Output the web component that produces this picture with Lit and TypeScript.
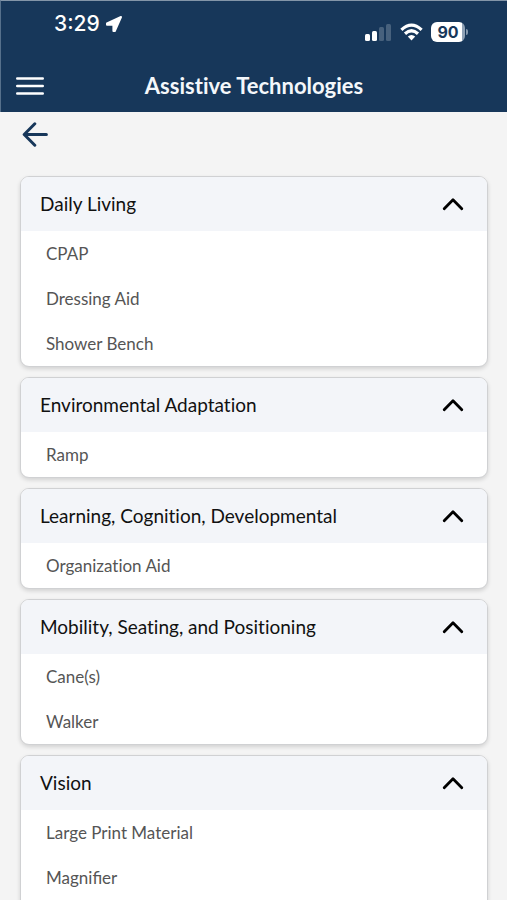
import { LitElement, html, css } from "lit";
import { customElement, property, state } from "lit/decorators.js";

interface Category {
  name: string;
  items: string[];
}

const CATEGORIES: Category[] = [
  { name: "Daily Living", items: ["CPAP", "Dressing Aid", "Shower Bench"] },
  { name: "Environmental Adaptation", items: ["Ramp"] },
  { name: "Learning, Cognition, Developmental", items: ["Organization Aid"] },
  { name: "Mobility, Seating, and Positioning", items: ["Cane(s)", "Walker"] },
  { name: "Vision", items: ["Large Print Material", "Magnifier"] },
];

@customElement("status-bar")
export class StatusBar extends LitElement {
  static styles = css`
    :host {
      box-sizing: border-box;
      display: flex;
      justify-content: space-between;
      align-items: flex-start;
      height: 59px;
      padding: 10px 39px 0 53px;
      color: #fff;
      font-family: Inter, sans-serif;
    }
    .clock {
      display: flex;
      align-items: center;
      gap: 5px;
      font-size: 21px;
      line-height: 26px;
      font-weight: 500;
    }
    .signals {
      display: flex;
      align-items: center;
      gap: 8px;
      padding-top: 11px;
    }
    .battery {
      display: flex;
      align-items: center;
      gap: 1px;
    }
    .level {
      width: 34px;
      height: 20px;
      border-radius: 6px;
      background: linear-gradient(90deg, #fff 90%, #8fa1b5 90%);
      color: #17375a;
      font-size: 16px;
      line-height: 20px;
      font-weight: 700;
      text-align: center;
    }
    .cap {
      width: 2px;
      height: 6px;
      border-radius: 0 2px 2px 0;
      background: #8397ac;
    }
    svg {
      display: block;
    }
  `;

  render() {
    return html`
      <div class="clock">
        <span>3:29</span>
        <svg width="18" height="18" viewBox="0 0 18 18" aria-hidden="true">
          <path d="M16 2 9.8 16H8.4V9.8H2V8.4Z" fill="#fff" stroke="#fff" stroke-width="2" stroke-linejoin="round" />
        </svg>
      </div>
      <div class="signals">
        <svg width="27" height="18" viewBox="0 0 27 18" aria-hidden="true">
          <rect x="0" y="11" width="5" height="7" rx="1.5" fill="#fff" />
          <rect x="7" y="8" width="5" height="10" rx="1.5" fill="#fff" />
          <rect x="14" y="4" width="5" height="14" rx="1.5" fill="#47617d" />
          <rect x="21" y="1" width="5" height="17" rx="1.5" fill="#47617d" />
        </svg>
        <svg width="23" height="18" viewBox="0 0 23 18" aria-hidden="true">
          <g fill="none" stroke="#fff" stroke-width="3.2">
            <path d="M1.4 6.8Q11.5-2.6 21.6 6.8" />
            <path d="M5 10.8Q11.5 4.8 18 10.8" />
          </g>
          <path d="M7.8 13.4Q11.5 10.4 15.2 13.4L11.5 17.4Z" fill="#fff" />
        </svg>
        <div class="battery">
          <div class="level">90</div>
          <div class="cap"></div>
        </div>
      </div>
    `;
  }
}

@customElement("category-card")
export class CategoryCard extends LitElement {
  @property({ attribute: false }) category!: Category;
  @state() private open = true;

  static styles = css`
    :host {
      display: block;
      flex: none;
      border: 1px solid #d0d1d3;
      border-radius: 9px;
      background: #fff;
      box-shadow: 0 2px 4px rgba(0, 0, 0, 0.14);
      overflow: hidden;
    }
    h2 {
      margin: 0;
    }
    .toggle {
      display: flex;
      align-items: center;
      justify-content: space-between;
      width: 100%;
      height: 54px;
      padding: 0 23px 0 19px;
      border: 0;
      background: #f3f5f9;
      color: #111;
      font: 400 19px/24px Lato, sans-serif;
      font-variant-ligatures: no-common-ligatures;
      text-align: left;
      cursor: pointer;
    }
    .closed svg {
      transform: rotate(180deg);
    }
    ul {
      margin: 0;
      padding: 0;
      list-style: none;
    }
    li {
      padding: 0 25px;
      color: #555;
      font-size: 17px;
      line-height: 45px;
    }
    .unjoined {
      font-variant-ligatures: no-common-ligatures;
    }
  `;

  render() {
    return html`
      <h2>
        <button
          class="toggle ${this.open ? "" : "closed"}"
          aria-expanded=${this.open ? "true" : "false"}
          @click=${() => (this.open = !this.open)}
        >
          <span>${this.category.name}</span>
          <svg width="22" height="14" viewBox="0 0 22 14" aria-hidden="true">
            <path d="M2.2 11.7 11 2.7l8.8 9" fill="none" stroke="#000" stroke-width="2.8" stroke-linecap="round" stroke-linejoin="round" />
          </svg>
        </button>
      </h2>
      ${this.open
        ? html`<ul>
            ${this.category.items.map(
              (item) => html`<li class=${item.includes("ti") ? "unjoined" : ""}>${item}</li>`
            )}
          </ul>`
        : null}
    `;
  }
}

@customElement("app-root")
export class AppRoot extends LitElement {
  static styles = css`
    :host {
      display: flex;
      flex-direction: column;
      height: 100vh;
      background: #f4f4f4;
      font-family: Lato, sans-serif;
    }
    .top {
      flex: none;
      border-top: 1px solid #8395a8;
      border-left: 1px solid #56708b;
      background: #17375a;
    }
    .bar {
      box-sizing: border-box;
      display: grid;
      grid-template-columns: 28px 1fr 28px;
      align-items: center;
      height: 52px;
      padding: 0 15px;
    }
    h1 {
      margin: 0;
      color: #f4f7fb;
      font-size: 22px;
      line-height: 28px;
      font-weight: 700;
      font-variant-ligatures: no-common-ligatures;
      text-align: center;
    }
    .icon {
      display: block;
      padding: 0;
      border: 0;
      background: none;
      cursor: pointer;
    }
    svg {
      display: block;
    }
    .content {
      flex: 1;
      min-height: 0;
      overflow-y: auto;
      scrollbar-width: none;
      padding: 10px 19px 0 20px;
    }
    .back {
      margin: 0 0 29px 2px;
    }
    .cards {
      display: flex;
      flex-direction: column;
      gap: 10px;
      padding-bottom: 20px;
    }
    .cards category-card:last-child {
      padding-bottom: 12px;
    }
  `;

  render() {
    return html`
      <header class="top">
        <status-bar></status-bar>
        <div class="bar">
          <button class="icon" aria-label="Menu">
            <svg width="28" height="20" viewBox="0 0 28 20">
              <path d="M1.2 2.5H26.8M1.2 10H26.8M1.2 17.5H26.8" fill="none" stroke="#fff" stroke-width="2.4" stroke-linecap="round" />
            </svg>
          </button>
          <h1>Assistive Technologies</h1>
        </div>
      </header>
      <main class="content">
        <button class="icon back" aria-label="Back">
          <svg width="26" height="25" viewBox="0 0 26 25">
            <path d="M12.8 1.8 2.2 12.5l10.6 10.7M2.2 12.5H24.4" fill="none" stroke="#17375a" stroke-width="3" stroke-linecap="round" stroke-linejoin="round" />
          </svg>
        </button>
        <div class="cards">
          ${CATEGORIES.map((c) => html`<category-card .category=${c}></category-card>`)}
        </div>
      </main>
    `;
  }
}
